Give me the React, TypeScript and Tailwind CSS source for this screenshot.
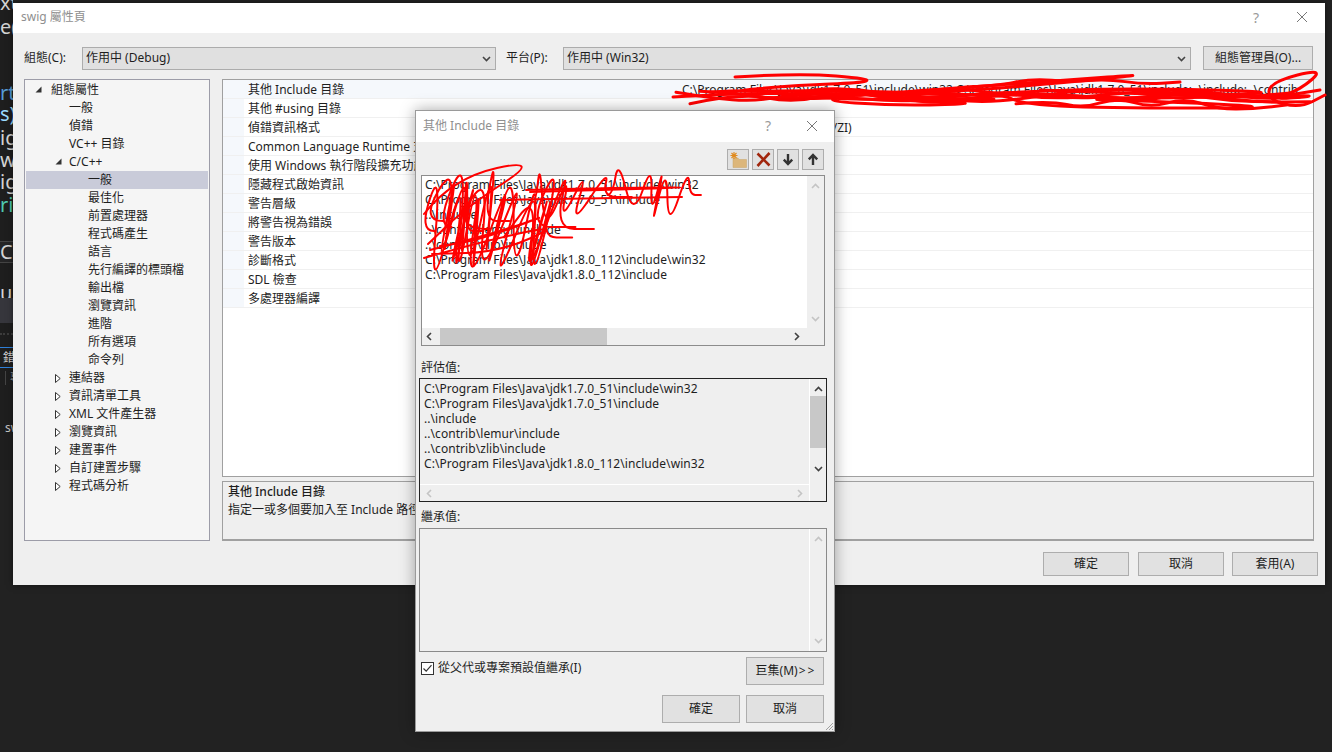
import React from 'react';

const FONT = "font-['Noto_Sans','Noto_Sans_CJK_TC',sans-serif]";

const treeItems: { label: string; level: number; icon?: 'open' | 'closed'; selected?: boolean }[] = [
  { label: '組態屬性', level: 0, icon: 'open' },
  { label: '一般', level: 1 },
  { label: '偵錯', level: 1 },
  { label: 'VC++ 目錄', level: 1 },
  { label: 'C/C++', level: 1, icon: 'open' },
  { label: '一般', level: 2, selected: true },
  { label: '最佳化', level: 2 },
  { label: '前置處理器', level: 2 },
  { label: '程式碼產生', level: 2 },
  { label: '語言', level: 2 },
  { label: '先行編譯的標頭檔', level: 2 },
  { label: '輸出檔', level: 2 },
  { label: '瀏覽資訊', level: 2 },
  { label: '進階', level: 2 },
  { label: '所有選項', level: 2 },
  { label: '命令列', level: 2 },
  { label: '連結器', level: 1, icon: 'closed' },
  { label: '資訊清單工具', level: 1, icon: 'closed' },
  { label: 'XML 文件產生器', level: 1, icon: 'closed' },
  { label: '瀏覽資訊', level: 1, icon: 'closed' },
  { label: '建置事件', level: 1, icon: 'closed' },
  { label: '自訂建置步驟', level: 1, icon: 'closed' },
  { label: '程式碼分析', level: 1, icon: 'closed' },
];

const propRows: { name: string; value?: string }[] = [
  { name: '其他 Include 目錄', value: 'C:\\Program Files\\Java\\jdk1.7.0_51\\include\\win32;C:\\Program Files\\Java\\jdk1.7.0_51\\include;..\\include;..\\contrib' },
  { name: '其他 #using 目錄' },
  { name: '偵錯資訊格式', value: '供編輯後繼續的程式資料庫 (/ZI)' },
  { name: 'Common Language Runtime 支援' },
  { name: '使用 Windows 執行階段擴充功能' },
  { name: '隱藏程式啟始資訊' },
  { name: '警告層級' },
  { name: '將警告視為錯誤' },
  { name: '警告版本' },
  { name: '診斷格式' },
  { name: 'SDL 檢查' },
  { name: '多處理器編譯' },
];

const includeLines = [
  'C:\\Program Files\\Java\\jdk1.7.0_51\\include\\win32',
  'C:\\Program Files\\Java\\jdk1.7.0_51\\include',
  '..\\include',
  '..\\contrib\\lemur\\include',
  '..\\contrib\\zlib\\include',
  'C:\\Program Files\\Java\\jdk1.8.0_112\\include\\win32',
  'C:\\Program Files\\Java\\jdk1.8.0_112\\include',
];

const editorLines: { text: string; top: number; color: string }[] = [
  { text: 'xte', top: -9, color: 'text-[#d4d4d4]' },
  { text: 'e(', top: 15, color: 'text-[#d4d4d4]' },
  { text: 'rtu', top: 81, color: 'text-[#569cd6]' },
  { text: 's)', top: 102, color: 'text-[#9cdcfe]' },
  { text: 'ig', top: 126, color: 'text-[#d4d4d4]' },
  { text: 'wi', top: 148, color: 'text-[#d4d4d4]' },
  { text: 'ig', top: 170, color: 'text-[#d4d4d4]' },
  { text: 'ri_', top: 193, color: 'text-[#4ec9b0]' },
];

// small seeded random, the scribbles must come out the same on every render
function makeRand(seed: number) {
  let s = seed;
  return () => {
    s = (s * 16807) % 2147483647;
    return (s % 1000) / 1000;
  };
}

// points to a curved line, so the scribbles look hand drawn
function smooth(pts: number[][]) {
  let d = `M${pts[0][0]} ${pts[0][1]}`;
  for (let i = 1; i < pts.length - 1; i++) {
    const mx = (pts[i][0] + pts[i + 1][0]) / 2;
    const my = (pts[i][1] + pts[i + 1][1]) / 2;
    d += ` Q${pts[i][0]} ${pts[i][1]} ${mx} ${my}`;
  }
  const last = pts[pts.length - 1];
  return `${d} L${last[0]} ${last[1]}`;
}

// zigzag that runs left to right between a top and a bottom edge, the ends stay on the middle line
function zigzag(x0: number, x1: number, top: number, bottom: number, n: number, slant: number, seed: number) {
  const rand = makeRand(seed);
  const pts: number[][] = [];
  for (let i = 0; i <= n; i++) {
    const t = i / n;
    const up = i % 2 === 0;
    const x = x0 + (x1 - x0) * t + (rand() - 0.5) * 24 + (up ? slant : 0);
    const y = (up ? top : bottom) + (rand() - 0.5) * 16;
    pts.push([x, i <= 1 || i >= n - 1 ? (top + bottom) / 2 : y]);
  }
  return pts;
}

// long thin strokes going back and forth
function sweep(x0: number, x1: number, top: number, bottom: number, n: number, seed: number) {
  const rand = makeRand(seed);
  const pts: number[][] = [];
  for (let i = 0; i <= n; i++) {
    const x = x0 + (x1 - x0) * (i / n);
    pts.push([x, top + (bottom - top) * rand()]);
  }
  return pts;
}

const listScribbles = [
  zigzag(412, 490, 156, 286, 14, 22, 11),
  zigzag(418, 470, 164, 298, 10, 20, 19),
  zigzag(424, 540, 158, 296, 16, 26, 23),
  zigzag(450, 560, 164, 294, 12, 30, 37),
  zigzag(490, 556, 185, 290, 6, 24, 41),
  zigzag(515, 610, 166, 228, 10, 14, 53),
  zigzag(600, 695, 164, 226, 12, 14, 61),
  [[424, 214], [452, 178], [542, 158], [468, 206], [428, 244]],
  [[424, 258], [480, 242], [562, 224], [500, 252], [432, 254]],
  [[430, 250], [500, 232], [555, 212], [480, 240], [440, 246]],
  [[526, 190], [600, 188], [708, 187], [600, 190], [530, 192]],
  [[500, 200], [610, 198], [682, 197]],
];

const valueScribbles = [
  [[673, 97], [760, 92], [850, 96], [950, 92], [1050, 84], [1162, 73], [1040, 82], [900, 92], [810, 100], [900, 106], [990, 103], [880, 100], [1016, 92], [1130, 88], [1290, 92], [1200, 96], [1040, 90]],
  [[735, 77], [800, 73], [872, 79], [860, 83], [800, 85], [720, 92], [820, 90], [960, 94]],
  [[780, 94], [1000, 92], [1020, 104], [1100, 108], [1286, 108], [1180, 102], [1060, 99], [1250, 97], [1325, 95], [1270, 100], [1300, 90], [1325, 68], [1270, 82], [1268, 100], [1300, 108], [1325, 95]],
  sweep(676, 1320, 88, 102, 14, 71),
  sweep(690, 1310, 90, 104, 12, 83),
  sweep(700, 1300, 87, 102, 16, 97),
  sweep(760, 1280, 90, 104, 10, 101),
  sweep(710, 1290, 88, 103, 13, 211),
  sweep(806, 994, 96, 110, 6, 113),
  sweep(1016, 1286, 97, 111, 8, 127),
  sweep(960, 1180, 76, 92, 6, 131),
];

function Chevron({ dir, color = '#404040', className = '' }: { dir: 'up' | 'down' | 'left' | 'right'; color?: string; className?: string }) {
  const pts = {
    up: '1,6 4.5,2.5 8,6',
    down: '1,3 4.5,6.5 8,3',
    left: '6,1 2.5,4.5 6,8',
    right: '3,1 6.5,4.5 3,8',
  }[dir];
  return (
    <svg width="9" height="9" viewBox="0 0 9 9" className={className}>
      <polyline points={pts} fill="none" stroke={color} strokeWidth="1.6" />
    </svg>
  );
}

function TreeIcon({ kind }: { kind: 'open' | 'closed' }) {
  if (kind === 'open') {
    return (
      <svg width="7" height="7" viewBox="0 0 7 7">
        <path d="M0.5 6.5 L6.5 6.5 L6.5 0.5 Z" fill="#333" />
      </svg>
    );
  }
  return (
    <svg width="6" height="9" viewBox="0 0 6 9">
      <path d="M0.5 0.5 L5.2 4.5 L0.5 8.5 Z" fill="#fff" stroke="#333" />
    </svg>
  );
}

function WinButton({ children, className = '' }: { children: React.ReactNode; className?: string }) {
  return (
    <button className={`flex items-center justify-center bg-[#e1e1e1] border border-[#adadad] text-[12px] text-[#1e1e1e] ${className}`}>
      {children}
    </button>
  );
}

function ToolButton({ children }: { children: React.ReactNode }) {
  return <div className="flex items-center justify-center w-[22px] h-[21px] bg-[#e1e1e1] border border-[#adadad]">{children}</div>;
}

function Combo({ text, className = '' }: { text: string; className?: string }) {
  return (
    <div className={`flex items-center justify-between h-[23px] bg-[#e0e0e0] border border-[#acacac] pl-[3px] pr-[4px] text-[12px] text-[#1e1e1e] ${className}`}>
      <span>{text}</span>
      <Chevron dir="down" color="#444" />
    </div>
  );
}

function MainDialog() {
  return (
    <div className="absolute left-[13px] top-[3px] w-[1312px] h-[582px] bg-[#efefef] shadow-[0_0_6px_rgba(0,0,0,0.5)] flex flex-col">
      <div className="flex items-center justify-between h-[30px] bg-white pl-[8px] pr-[17px] pb-[2px] shrink-0">
        <span className="text-[12px] text-[#8f8f8f]">swig 屬性頁</span>
        <div className="flex items-center gap-[37px]">
          <span className="text-[14px] text-[#9a9a9a]">?</span>
          <svg width="12" height="12" viewBox="0 0 12 12">
            <path d="M1 1 L11 11 M11 1 L1 11" stroke="#777" strokeWidth="1" />
          </svg>
        </div>
      </div>

      <div className="flex items-center pl-[11px] pr-[12px] mt-[13px] h-[24px] text-[12px] text-[#1e1e1e] shrink-0">
        <span className="w-[58px]">組態(C):</span>
        <Combo text="作用中 (Debug)" className="w-[414px]" />
        <span className="ml-[10px] w-[57px]">平台(P):</span>
        <Combo text="作用中 (Win32)" className="w-[628px]" />
        <WinButton className="ml-[12px] w-[110px] h-[24px]">組態管理員(O)...</WinButton>
      </div>

      <div className="flex gap-[12px] pl-[11px] mt-[9px] h-[462px] shrink-0 text-[12px] text-[#1e1e1e]">
        <div className="w-[186px] bg-[#f5f5f5] border border-[#9c9ca8] px-[1px] pt-[1px]">
          {treeItems.map((item, i) => (
            <div key={i} className={`relative flex items-center h-[18px] ${item.selected ? 'bg-[#c9cbd9]' : ''} ${item.level === 0 ? 'pl-[25px]' : item.level === 1 ? 'pl-[43px]' : 'pl-[62px]'}`}>
              {item.icon && (
                <span className={`absolute top-[5px] ${item.level === 0 ? 'left-[9px]' : 'left-[29px]'}`}>
                  <TreeIcon kind={item.icon} />
                </span>
              )}
              {item.label}
            </div>
          ))}
        </div>

        <div className="flex flex-col gap-[4px] w-[1092px]">
          <div className="h-[398px] bg-white border border-[#a0a0a0]">
            {propRows.map((row, i) => (
              <div key={i} className={`flex h-[19px] pt-[1px] border-b border-[#f0f0f0] ${i === 0 ? 'bg-[#f5f8fc]' : ''}`}>
                <div className="w-[21px] bg-[#f5f8fc] shrink-0 -mt-[1px]" />
                <div className="w-[431px] pl-[4px] flex items-center whitespace-nowrap overflow-hidden shrink-0">{row.name}</div>
                <div className="flex-1 pl-[7px] flex items-center whitespace-nowrap overflow-hidden">{row.value}</div>
              </div>
            ))}
          </div>
          <div className="h-[60px] bg-[#efefef] border border-[#a0a0a0] border-b-2 pl-[5px] pt-[1px]">
            <div className="leading-[18px] font-medium">其他 Include 目錄</div>
            <div className="leading-[18px]">指定一或多個要加入至 Include 路徑的目錄</div>
          </div>
        </div>
      </div>

      <div className="flex justify-end pr-[7px] mt-[11px] shrink-0">
        <WinButton className="w-[86px] h-[24px]">確定</WinButton>
        <WinButton className="ml-[9px] w-[86px] h-[24px]">取消</WinButton>
        <WinButton className="ml-[8px] w-[86px] h-[24px]">套用(A)</WinButton>
      </div>
    </div>
  );
}

function IncludeDialog() {
  return (
    <div className="absolute left-[415px] top-[110px] w-[420px] h-[622px] bg-[#efefef] border border-[#9a9a9a] shadow-[0_0_14px_rgba(0,0,0,0.35)] flex flex-col text-[12px] text-[#1e1e1e]">
      <div className="flex items-center justify-between h-[31px] bg-white pl-[7px] pr-[16px] pb-[2px] shrink-0">
        <span className="text-[#8f8f8f]">其他 Include 目錄</span>
        <div className="flex items-center gap-[35px]">
          <span className="text-[14px] text-[#9a9a9a]">?</span>
          <svg width="12" height="12" viewBox="0 0 12 12">
            <path d="M1 1 L11 11 M11 1 L1 11" stroke="#777" strokeWidth="1" />
          </svg>
        </div>
      </div>

      <div className="flex justify-end gap-[3px] pr-[10px] mt-[7px] shrink-0">
        <ToolButton>
          <svg width="20" height="19" viewBox="0 0 20 19">
            <path d="M5 8 H10 L11 9.5 H18.5 V17.5 H5 Z" fill="#dcb67a" stroke="#c9a468" strokeWidth="0.5" />
            <path d="M6 2 V9 M2.5 5.5 H9.5 M3.5 3 L8.5 8 M8.5 3 L3.5 8" stroke="#e08a1e" strokeWidth="1.1" />
          </svg>
        </ToolButton>
        <ToolButton>
          <svg width="15" height="15" viewBox="0 0 15 15">
            <path d="M1.5 1.5 L13.5 13.5 M13.5 1 L1.5 14" stroke="#a1260d" strokeWidth="2.6" />
          </svg>
        </ToolButton>
        <ToolButton>
          <svg width="12" height="13" viewBox="0 0 12 13">
            <path d="M6 1 V11 M1.8 6.6 L6 11 L10.2 6.6" fill="none" stroke="#333" strokeWidth="2.4" />
          </svg>
        </ToolButton>
        <ToolButton>
          <svg width="12" height="13" viewBox="0 0 12 13">
            <path d="M6 12 V2 M1.8 6.4 L6 2 L10.2 6.4" fill="none" stroke="#333" strokeWidth="2.4" />
          </svg>
        </ToolButton>
      </div>

      <div className="relative mt-[5px] ml-[5px] w-[404px] h-[171px] border border-[#8c8c8c] bg-white shrink-0 overflow-hidden">
        <div className="pl-[3px] pt-[1px] leading-[15px] whitespace-nowrap tracking-[0.06px]">
          {includeLines.map((line) => (
            <div key={line}>{line}</div>
          ))}
        </div>
        <div className="absolute right-0 top-0 bottom-0 w-[17px] bg-[#efefef] flex flex-col items-center justify-between py-[6px]">
          <Chevron dir="up" color="#c4c4c4" />
          <Chevron dir="down" color="#c4c4c4" className="mb-[16px]" />
        </div>
        <div className="absolute left-0 right-0 bottom-0 h-[17px] bg-[#efefef] flex items-center justify-between px-[3px]">
          <Chevron dir="left" />
          <div className="absolute left-[18px] top-0 w-[167px] h-[17px] bg-[#c8c8c8]" />
          <Chevron dir="right" className="mr-[20px]" />
        </div>
      </div>

      <div className="ml-[5px] mt-[14px] leading-[16px] shrink-0">評估值:</div>
      <div className="relative mt-[2px] ml-[3px] w-[408px] h-[124px] border border-[#222] bg-[#efefef] shrink-0">
        <div className="pl-[4px] pt-[2px] leading-[15px] whitespace-nowrap tracking-[0.06px]">
          {includeLines.slice(0, 6).map((line) => (
            <div key={line}>{line}</div>
          ))}
        </div>
        <div className="absolute right-0 top-0 bottom-0 w-[17px] border-l border-white flex flex-col items-center pt-[6px]">
          <Chevron dir="up" />
          <div className="w-full h-[52px] bg-[#c8c8c8] mt-[2px]" />
          <Chevron dir="down" className="mt-[16px]" />
        </div>
        <div className="absolute left-0 right-[17px] bottom-0 h-[17px] border-t border-white flex items-center justify-between px-[5px]">
          <Chevron dir="left" color="#c4c4c4" />
          <Chevron dir="right" color="#c4c4c4" />
        </div>
      </div>

      <div className="ml-[5px] mt-[7px] leading-[16px] shrink-0">繼承值:</div>
      <div className="relative mt-[3px] ml-[3px] w-[408px] h-[124px] border border-[#8a8a8a] bg-[#efefef] shrink-0">
        <div className="absolute right-0 top-0 bottom-0 w-[17px] border-l border-white flex flex-col items-center justify-between py-[6px]">
          <Chevron dir="up" color="#c4c4c4" />
          <Chevron dir="down" color="#c4c4c4" />
        </div>
      </div>

      <div className="flex items-start justify-between pl-[5px] pr-[10px] mt-[5px] shrink-0">
        <label className="flex items-center gap-[4px] mt-[4px]">
          <span className="flex items-center justify-center w-[13px] h-[13px] bg-white border border-[#333]">
            <svg width="11" height="11" viewBox="0 0 11 11">
              <path d="M1.5 5.5 L4.2 8.2 L9.5 2.2" fill="none" stroke="#333" strokeWidth="1.2" />
            </svg>
          </span>
          <span className="leading-[14px]">從父代或專案預設值繼承(I)</span>
        </label>
        <WinButton className="w-[78px] h-[28px]">
          巨集(M)<span className="tracking-[2px] ml-[1px] -mr-[2px]">&gt;&gt;</span>
        </WinButton>
      </div>

      <div className="flex justify-end gap-[6px] pr-[10px] mt-[10px] shrink-0">
        <WinButton className="w-[78px] h-[28px]">確定</WinButton>
        <WinButton className="w-[78px] h-[28px]">取消</WinButton>
      </div>

      <svg width="12" height="12" viewBox="0 0 12 12" className="absolute right-0 bottom-0">
        <path d="M11 4 L4 11 M11 7 L7 11 M11 10 L10 11" stroke="#a0a0a0" strokeWidth="1" />
      </svg>
    </div>
  );
}

function EditorStrip() {
  return (
    <div className="absolute left-0 top-0 w-[13px] h-[470px] overflow-hidden bg-[#1e1e1e] text-[20px] leading-[24px]">
      {editorLines.map((line) => (
        <div key={line.top} className={`absolute left-0 ${line.color}`} style={{ top: line.top }}>
          {line.text}
        </div>
      ))}
      <div className="absolute left-0 top-[241px] w-full h-[22px] bg-[#252526] border-y border-[#444] text-[#d4d4d4] leading-[20px]">C</div>
      <div className="absolute left-0 top-[281px] w-full h-[17px] overflow-hidden text-[#d4d4d4]">un</div>
      <div className="absolute left-0 top-[298px] w-full h-[25px] bg-[#36363c]" />
      <div className="absolute left-0 top-[333px] w-full border-t-2 border-dotted border-[#3c3c3c]" />
      <div className="absolute left-0 top-[347px] w-full h-[21px] border-y border-[#2f80d8] text-[12px] leading-[19px] pl-[3px] text-[#d4d4d4]">錯</div>
      <div className="absolute left-[5px] top-[371px] h-[14px] border-l border-[#444] text-[12px] leading-[14px] pl-[4px] text-[#999]">專</div>
      <div className="absolute left-[5px] top-[420px] text-[12px] leading-[16px] text-[#c8c8c8]">sw</div>
    </div>
  );
}

export default function App() {
  return (
    <div className={`relative w-[1332px] h-[752px] overflow-hidden bg-[#222222] ${FONT}`}>
      <EditorStrip />
      <MainDialog />
      <svg width="1332" height="752" className="absolute left-0 top-0 pointer-events-none">
        {valueScribbles.map((pts, i) => (
          <path key={i} d={smooth(pts)} fill="none" stroke="#ff0000" strokeWidth="3" strokeLinejoin="round" strokeLinecap="round" />
        ))}
      </svg>
      <IncludeDialog />
      <svg width="1332" height="752" className="absolute left-0 top-0 pointer-events-none">
        {listScribbles.map((pts, i) => (
          <path key={i} d={smooth(pts)} fill="none" stroke="#ff0000" strokeWidth="2" strokeLinejoin="round" strokeLinecap="round" />
        ))}
      </svg>
    </div>
  );
}
